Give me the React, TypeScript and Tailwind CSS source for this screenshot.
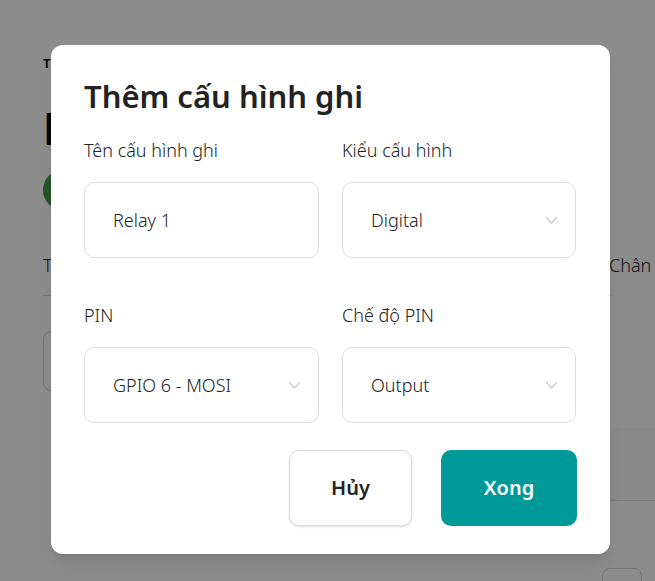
import React from 'react';

const font = { fontFamily: '"Noto Sans", "Open Sans", sans-serif' };

const Chevron = () => (
  <svg width="13" height="8" viewBox="0 0 13 8" fill="none" className="shrink-0">
    <polyline points="1,1 6.5,7 12,1" stroke="#b8b8b8" strokeWidth="1.1" />
  </svg>
);

const Field = ({ value, select }: { value: string; select?: boolean }) => (
  <div className="flex h-[76px] items-center justify-between rounded-[10px] border border-[#dedede] bg-white pl-[28px] pr-[17px]">
    <span className="text-[18px] font-light text-[#222]">{value}</span>
    {select && <Chevron />}
  </div>
);

const Labelled = ({ label, children }: { label: string; children: React.ReactNode }) => (
  <div className="flex flex-col gap-[20px]">
    <span className="text-[18px] font-light leading-[24px] text-[#222]">{label}</span>
    {children}
  </div>
);

export default function App() {
  return (
    <div className="relative h-[581px] w-[655px] overflow-hidden bg-white" style={font}>
      {/* page behind the dialog */}
      <div className="flex flex-col px-[43px] pt-[54px]">
        <span className="text-[13px] font-bold text-[#111]">T</span>
        <h1 className="mt-[28px] text-[44px] font-extrabold leading-[52px] text-black">H</h1>
        <div className="mt-[16px] h-[40px] w-[40px] rounded-full bg-[#3f9c45]" />
        <div className="mt-[42px] flex items-center justify-between border-b border-[#d8d8d8] pb-[16px]">
          <span className="text-[18px] font-light text-[#222]">T</span>
          <span className="-mr-[43px] w-[46px] overflow-hidden whitespace-nowrap text-[18px] font-light text-[#222]">Chân</span>
        </div>
        <div className="mt-[35px] h-[60px] w-[200px] rounded-[8px] border border-[#cfcfcf]" />
        <div className="-mr-[43px] ml-[250px] mt-[37px] h-[73px] border-b border-[#e0e0e0] bg-[#fafafa]" />
        <div className="-mr-[30px] mt-[67px] flex justify-end">
          <div className="h-[30px] w-[40px] rounded-t-[8px] border border-[#d0d0d0]" />
        </div>
      </div>

      {/* overlay */}
      <div className="absolute inset-0 bg-black/45 pl-[51px] pt-[45px]">
        <div className="flex w-[559px] flex-col rounded-[12px] bg-white px-[33px] pb-[28px] pt-[31px] shadow-lg">
          <h2 className="text-[31px] font-semibold leading-[40px] text-[#222]">Thêm cấu hình ghi</h2>
          <div className="mt-[22px] grid grid-cols-[235px_234px] gap-x-[23px] gap-y-[45px]">
            <Labelled label="Tên cấu hình ghi">
              <Field value="Relay 1" />
            </Labelled>
            <Labelled label="Kiểu cấu hình">
              <Field value="Digital" select />
            </Labelled>
            <Labelled label="PIN">
              <Field value="GPIO 6 - MOSI" select />
            </Labelled>
            <Labelled label="Chế độ PIN">
              <Field value="Output" select />
            </Labelled>
          </div>
          <div className="mt-[27px] flex justify-end gap-[29px]">
            <button className="h-[76px] w-[123px] rounded-[10px] border border-[#dcdcdc] bg-white text-[20px] font-semibold text-[#222] shadow-sm">
              Hủy
            </button>
            <button className="h-[76px] w-[136px] rounded-[10px] bg-[#009999] text-[20px] font-semibold text-white">
              Xong
            </button>
          </div>
        </div>
      </div>
    </div>
  );
}
